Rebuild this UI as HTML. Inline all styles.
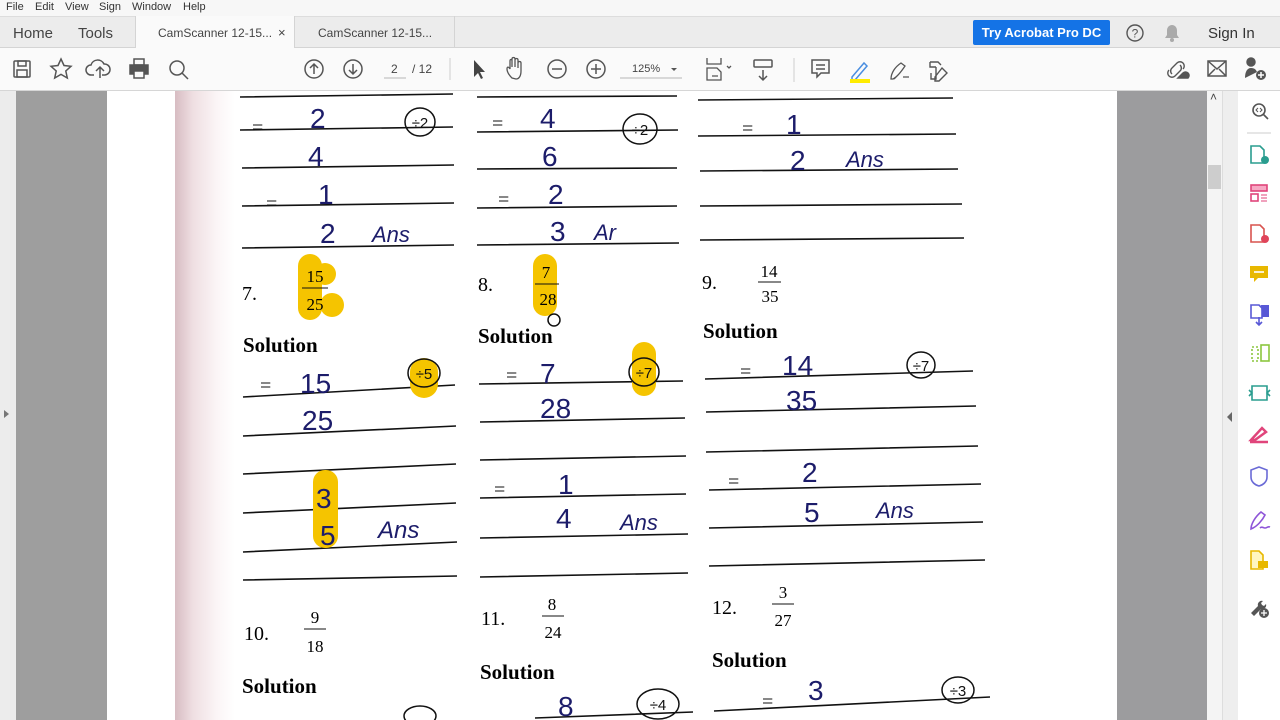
<!DOCTYPE html>
<html><head><meta charset="utf-8">
<style>
*{margin:0;padding:0;box-sizing:border-box}
body{width:1280px;height:720px;overflow:hidden;position:relative;font-family:"Liberation Sans",sans-serif;background:#fff}
.abs{position:absolute}
#menu{top:0;left:0;width:1280px;height:16px;background:#f7f7f7;font-size:11px;color:#333}
#menu span{position:absolute;top:1px}
#tabs{top:16px;left:0;width:1280px;height:32px;background:#ececec;border-top:1px solid #ddd;border-bottom:1px solid #d4d4d4}
#tabs .t{position:absolute;top:8px;font-size:14px;color:#444}
#tb{top:48px;left:0;width:1280px;height:43px;background:#fafafa;border-bottom:1px solid #d6d6d6}
.doc{font-family:"Liberation Serif",serif;color:#111}
</style></head><body>
<div id="menu" class="abs">
<span style="left:6px">File</span><span style="left:35px">Edit</span><span style="left:65px">View</span><span style="left:99px">Sign</span><span style="left:132px">Window</span><span style="left:183px">Help</span>
</div>
<div id="tabs" class="abs">
<div class="abs" style="left:135px;top:-1px;width:160px;height:32px;background:#fafafa;border-left:1px solid #d4d4d4;border-right:1px solid #d4d4d4"></div>
<div class="abs" style="left:295px;top:-1px;width:160px;height:32px;border-right:1px solid #d4d4d4"></div>
<span class="t" style="left:13px;font-size:15px">Home</span>
<span class="t" style="left:78px;font-size:15px">Tools</span>
<span class="t" style="left:158px;font-size:12px;top:9px">CamScanner 12-15...</span>
<span class="t" style="left:278px;font-size:13px;top:8px">×</span>
<span class="t" style="left:318px;font-size:12px;top:9px">CamScanner 12-15...</span>
<div class="abs" style="left:973px;top:3px;width:137px;height:25px;background:#1473e6;border-radius:2px;color:#fff;font-weight:bold;font-size:13px;text-align:center;line-height:25px">Try Acrobat Pro DC</div>
<svg class="abs" style="left:1125px;top:6px" width="20" height="20"><circle cx="10" cy="10" r="8" fill="none" stroke="#555" stroke-width="1.4"/><text x="10" y="14.5" font-size="12" text-anchor="middle" fill="#555" font-family="Liberation Sans">?</text></svg>
<svg class="abs" style="left:1163px;top:6px" width="18" height="20"><path d="M9 2c-3 0-5 2.5-5 5.5V12l-2 3h14l-2-3V7.5C14 4.5 12 2 9 2z" fill="#aaa"/><circle cx="9" cy="17" r="2" fill="#aaa"/></svg>
<span class="t" style="left:1208px;font-size:15px;color:#333">Sign In</span>
</div>
<div id="tb" class="abs">
<svg width="1280" height="43" fill="none" stroke="#555" stroke-width="1.5">
<rect x="14" y="13" width="16" height="16" rx="1"/><rect x="18" y="13" width="8" height="5"/><rect x="17" y="22" width="10" height="7"/>
<path d="M61 11l3 6.5 7 .8-5.2 4.7 1.5 7-6.3-3.6-6.3 3.6 1.5-7L51 18.3l7-.8z"/>
<path d="M94 27h-3a5 5 0 0 1 0-10 7 7 0 0 1 13-1 5 5 0 0 1 1 11h-3M100 30v-11M96 23l4-4 4 4"/>
<rect x="130" y="17" width="18" height="9" fill="#555"/><rect x="134" y="11" width="10" height="6"/><rect x="134" y="23" width="10" height="7" fill="#fafafa"/>
<circle cx="177" cy="20" r="7"/><path d="M182 25l6 6"/>
<circle cx="314" cy="21" r="9"/><path d="M314 26v-10M310 20l4-4 4 4"/>
<circle cx="353" cy="21" r="9"/><path d="M353 16v10M349 22l4 4 4-4"/>
<path d="M384 30h22" stroke="#ccc"/>
<path d="M450 10v22" stroke="#ddd"/>
<path d="M474 12l0 17 4-4 3 6 2-1-3-6 5 0z" fill="#444" stroke="none"/>
<path d="M512 30c-3-3-5-6-5-9s2-2 3 0V13c0-2 2-2 2 0v6-8c0-2 3-2 3 0v8-7c0-2 3-2 3 0v8-5c0-2 3-2 3 0v8c0 5-2 8-5 8z" stroke-width="1.3"/>
<circle cx="557" cy="21" r="9"/><path d="M552 21h10"/>
<circle cx="596" cy="21" r="9"/><path d="M591 21h10M596 16v10"/>
<path d="M620 30h62" stroke="#ccc"/>
<path d="M671 20l3 3 3-3" fill="#555" stroke="none"/>
<path d="M707 10v6h14v-6M707 32V20h10l4 4v8zM712 28h6M727 18l2 2 2-2" stroke-width="1.3"/>
<rect x="754" y="12" width="18" height="7" rx="1"/><path d="M763 22v10M759 28l4 4 4-4"/>
<path d="M794 10v24" stroke="#ddd"/>
<path d="M812 12h17v13h-8l-4 4v-4h-5zM816 17h9M816 21h9"/>
<path d="M852 29l12-14 3 3-12 14h-3z" stroke="#4a8ee0"/><rect x="850" y="31" width="20" height="4" fill="#ffec00" stroke="none"/>
<path d="M891 31c0-6 4-12 10-16l4 3c-4 6-8 11-12 13zM894 31l4-4M903 29h6" stroke-width="1.3"/>
<path d="M930 14h8l3 3M930 14v5h6M936 19v12h-5v-6M942 20l5 5-8 8-4 0 0-4z" stroke-width="1.4"/>
<path d="M1172 26a4 4 0 0 1 0-6l5-5a4 4 0 0 1 6 6M1180 17a4 4 0 0 1 0 6l-5 5a4 4 0 0 1-6-6" stroke-width="1.4"/><path d="M1178 30h10a3 3 0 0 0-5-5z" fill="#555"/>
<rect x="1208" y="13" width="18" height="15"/><path d="M1208 13l9 8 9-8M1208 28l7-7M1226 28l-7-7"/>
<circle cx="1251" cy="14" r="4" fill="#555"/><path d="M1245 30c0-6 2-10 6-10s5 2 6 4" fill="#555" stroke="none"/><circle cx="1261" cy="27" r="5" fill="#555" stroke="none"/><path d="M1261 24v6M1258 27h6" stroke="#fff"/>
</svg>
<span class="abs" style="left:391px;top:14px;font-size:12px;color:#444">2</span>
<span class="abs" style="left:412px;top:14px;font-size:12px;color:#444">/ 12</span>
<span class="abs" style="left:632px;top:15px;font-size:11px;color:#444">125%</span>
</div>
<div class="abs" style="left:0;top:91px;width:16px;height:629px;background:#ececec"></div>
<div class="abs" style="left:4px;top:410px;width:0;height:0;border-left:5px solid #777;border-top:4px solid transparent;border-bottom:4px solid transparent"></div>
<div class="abs" style="left:16px;top:91px;width:91px;height:629px;background:#9e9e9e"></div>
<div class="abs" style="left:107px;top:91px;width:1010px;height:629px;background:#fff"></div>
<div class="abs" style="left:175px;top:91px;width:60px;height:629px;background:linear-gradient(90deg,#d7bcc2,#efdfe2 30%,#fbf5f6 70%,#fff)"></div>
<div class="abs" style="left:1117px;top:91px;width:90px;height:629px;background:#9c9c9e"></div>
<div class="abs" style="left:1207px;top:91px;width:15px;height:629px;background:#f4f4f4"></div>
<div class="abs" style="left:1208px;top:165px;width:13px;height:24px;background:#cdcdcd"></div>
<span class="abs" style="left:1210px;top:90px;font-size:12px;color:#444">˄</span>
<div class="abs" style="left:1222px;top:91px;width:16px;height:629px;background:#eeeeee;border-left:1px solid #ddd"></div>
<div class="abs" style="left:1227px;top:412px;width:0;height:0;border-right:5px solid #666;border-top:5px solid transparent;border-bottom:5px solid transparent"></div>
<div class="abs" style="left:1238px;top:91px;width:42px;height:629px;background:#fff"></div>
<svg class="abs" style="left:1238px;top:91px" width="42" height="629" fill="none" stroke-width="1.6">
<circle cx="21" cy="19" r="6" stroke="#555"/><path d="M25 23l5 5" stroke="#555"/><path d="M20 17l-2 2 2 2M22 17l2 2-2 2" stroke="#555" stroke-width="1"/>
<path d="M9 42h24" stroke="#ddd"/>
<path d="M13 55h9l4 4v13h-13z" stroke="#2a9d8f"/><circle cx="27" cy="69" r="4" fill="#2a9d8f"/>
<rect x="13" y="94" width="16" height="6" stroke="#e0457b" fill="#f7a8c4"/><rect x="13" y="103" width="7" height="7" stroke="#e0457b"/><path d="M23 104h6M23 107h6M23 110h6" stroke="#e0457b" stroke-width="1"/>
<path d="M13 134h9l4 4v13h-13z" stroke="#d9534f"/><circle cx="27" cy="148" r="4" fill="#e0445a"/>
<path d="M12 175h18v12h-10l-4 4v-4h-4z" fill="#e8b800" stroke="none"/><path d="M16 181h10" stroke="#fff"/>
<path d="M13 214h8l3 3v10h-11z" stroke="#5858d6"/><path d="M23 214h8v12h-7z" fill="#5858d6" stroke="none"/><path d="M21 226v7M18 231l3 3 3-3" stroke="#5858d6"/>
<path d="M14 256h6v14h-6z" stroke="#8cc63f" stroke-dasharray="2 2"/><rect x="23" y="254" width="8" height="16" stroke="#8cc63f"/>
<path d="M14 295h15v14h-15zM11 299l3 3-3 3M32 299l-3 3 3 3" stroke="#2a9d8f"/>
<path d="M13 349l11-12 4 4-11 8zM12 351h18" stroke="#e0457b" stroke-width="2.5"/>
<path d="M21 376l8 3v7c0 5-4 8-8 9-4-1-8-4-8-9v-7z" stroke="#6a6ad6"/>
<path d="M13 438c0-5 4-12 10-17l4 3c-3 6-8 11-12 13zM22 437c2-2 3 0 5 0s3-2 5-1" stroke="#8e55d8"/>
<path d="M13 460h8l4 4v14h-12z" stroke="#e8b800" fill="#fff6c0"/><rect x="20" y="470" width="10" height="7" fill="#e8b800" stroke="none"/>
<path d="M13 522l7-7a4 4 0 0 1 5-5l-2 2 1 2 2 1 2-2a4 4 0 0 1-5 5l-7 7z" fill="#555" stroke="none"/><circle cx="26" cy="522" r="5" fill="#555"/><path d="M26 519v6M23 522h6" stroke="#fff" stroke-width="1.3"/>
</svg>
<svg class="abs doc" style="left:0;top:0" width="1117" height="720">
<g stroke="#111" stroke-width="1.6" fill="none">
<path d="M240 97l213-3M240 130l213-3M242 168l212-3M242 206l212-3M242 248l212-3"/>
<path d="M477 97l200-1M477 132l201-2M477 169l200-1M477 208l200-2M477 245l202-2"/>
<path d="M698 100l255-2M698 136l258-2M700 171l258-2M700 206l262-2M700 240l264-2"/>
<path d="M243 397l212-12M243 436l213-10M243 474l213-10M243 513l213-10M243 552l214-10M243 580l214-4"/>
<path d="M479 384l204-3M480 422l205-4M480 460l206-4M480 498l206-4M480 538l208-4M480 577l208-4"/>
<path d="M705 379l268-8M706 412l270-6M706 452l272-6M709 490l272-6M709 528l274-6M709 566l276-6"/>
<path d="M714 711l276-14M535 718l158-6"/>
</g>
<g fill="#f5c400">
<rect x="298" y="254" width="24" height="66" rx="12"/><circle cx="325" cy="274" r="11"/><circle cx="332" cy="305" r="12"/>
<rect x="533" y="254" width="24" height="62" rx="12"/>
<rect x="632" y="342" width="24" height="54" rx="12"/>
<path d="M410 372a14 14 0 0 1 28 0v12a14 14 0 0 1-28 0z"/>
<rect x="313" y="470" width="25" height="78" rx="12"/>
</g>
<g font-size="20">
<text x="242" y="300">7.</text><text x="478" y="291">8.</text><text x="702" y="289">9.</text>
<text x="244" y="640">10.</text><text x="481" y="625">11.</text><text x="712" y="614">12.</text>
</g>
<g font-size="17" text-anchor="middle">
<text x="315" y="282">15</text><text x="315" y="310">25</text><path d="M302 288h26" stroke="#111"/>
<text x="546" y="278">7</text><text x="548" y="305">28</text><path d="M535 284h24" stroke="#111"/>
<text x="769" y="277">14</text><text x="770" y="302">35</text><path d="M758 282h23" stroke="#111"/>
<text x="315" y="623">9</text><text x="315" y="652">18</text><path d="M304 629h22" stroke="#111"/>
<text x="552" y="610">8</text><text x="553" y="638">24</text><path d="M542 616h22" stroke="#111"/>
<text x="783" y="598">3</text><text x="783" y="626">27</text><path d="M772 604h22" stroke="#111"/>
</g>
<g font-size="21" font-weight="bold">
<text x="243" y="352">Solution</text><text x="478" y="343">Solution</text><text x="703" y="338">Solution</text>
<text x="242" y="693">Solution</text><text x="480" y="679">Solution</text><text x="712" y="667">Solution</text>
</g>
<g fill="#1c1c6a" font-family="Liberation Sans" font-size="28">
<text x="310" y="128">2</text><text x="308" y="166">4</text><text x="318" y="204">1</text><text x="320" y="243">2</text><text x="372" y="242" font-size="22" font-style="italic">Ans</text>
<text x="540" y="128">4</text><text x="542" y="166">6</text><text x="548" y="204">2</text><text x="550" y="241">3</text><text x="594" y="240" font-size="22" font-style="italic">Ar</text>
<text x="786" y="134">1</text><text x="790" y="170">2</text><text x="846" y="167" font-size="22" font-style="italic">Ans</text>
<text x="300" y="393">15</text><text x="302" y="430">25</text><text x="316" y="508">3</text><text x="320" y="545">5</text><text x="378" y="538" font-size="24" font-style="italic">Ans</text>
<text x="540" y="383">7</text><text x="540" y="418">28</text><text x="558" y="494">1</text><text x="556" y="528">4</text><text x="620" y="530" font-size="22" font-style="italic">Ans</text>
<text x="782" y="375">14</text><text x="786" y="410">35</text><text x="802" y="482">2</text><text x="804" y="522">5</text><text x="876" y="518" font-size="22" font-style="italic">Ans</text>
<text x="808" y="700">3</text><text x="558" y="716">8</text>
</g>
<g fill="none" stroke="#111" stroke-width="1.5">
<ellipse cx="420" cy="122" rx="15" ry="14"/><ellipse cx="640" cy="129" rx="17" ry="15"/>
<ellipse cx="424" cy="373" rx="16" ry="14"/><ellipse cx="644" cy="372" rx="15" ry="14"/><ellipse cx="921" cy="365" rx="14" ry="13"/>
<ellipse cx="958" cy="690" rx="16" ry="13"/><ellipse cx="658" cy="704" rx="21" ry="15"/><ellipse cx="420" cy="716" rx="16" ry="10"/>
<circle cx="554" cy="320" r="6"/>
</g>
<g font-size="15" fill="#111" font-family="Liberation Sans" text-anchor="middle">
<text x="420" y="128">÷2</text><text x="640" y="135">÷2</text><text x="424" y="379">÷5</text><text x="644" y="378">÷7</text><text x="921" y="371">÷7</text><text x="958" y="696">÷3</text><text x="658" y="710">÷4</text>
</g>
<g fill="#111" font-size="20">
<text x="252" y="134">=</text><text x="492" y="130">=</text><text x="742" y="135">=</text><text x="266" y="210">=</text><text x="498" y="206">=</text>
<text x="260" y="392">=</text><text x="506" y="382">=</text><text x="740" y="378">=</text><text x="728" y="488">=</text><text x="494" y="496">=</text><text x="762" y="708">=</text>
</g>
</svg>
</body></html>
